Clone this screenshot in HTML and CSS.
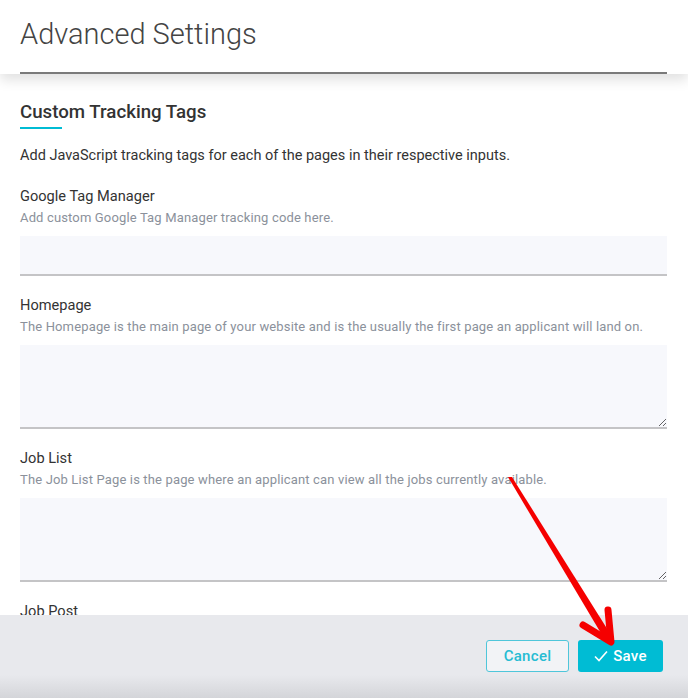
FILE: index.html
```html
<!doctype html>
<html lang="en">
<head>
    <meta charset="utf-8">
    <title>Advanced Settings</title>
    <meta name="viewport" content="width=device-width, initial-scale=1.0">
    <link rel="stylesheet" href="styles.css">
</head>
<body>
    <div class="modal">
        <header class="modal-header">
            <h1>Advanced Settings</h1>
        </header>
        <div class="modal-body">
            <h2 class="section-title">Custom Tracking Tags</h2>
            <p class="intro">Add JavaScript tracking tags for each of the pages in their respective inputs.</p>

            <div class="field">
                <label for="gtm">Google Tag Manager</label>
                <div class="hint">Add custom Google Tag Manager tracking code here.</div>
                <input type="text" id="gtm" class="input">
            </div>
            <div class="field">
                <label for="home">Homepage</label>
                <div class="hint">The Homepage is the main page of your website and is the usually the first page an applicant will land on.</div>
                <textarea id="home" class="input area"></textarea>
            </div>
            <div class="field">
                <label for="joblist">Job List</label>
                <div class="hint">The Job List Page is the page where an applicant can view all the jobs currently available.</div>
                <textarea id="joblist" class="input area"></textarea>
            </div>
            <div class="field">
                <label for="jobpost">Job Post</label>
                <div class="hint">The Job Post Page is the page where an applicant can view the details of a job.</div>
                <textarea id="jobpost" class="input area"></textarea>
            </div>
        </div>
        <footer class="modal-footer">
            <button class="btn btn-cancel">Cancel</button>
            <button class="btn btn-save">
                <svg width="14" height="12" viewBox="0 0 14 12"><path d="M1 6.5 L5 10.5 L13 1.5" fill="none" stroke="#fff" stroke-width="1.6"/></svg>
                Save
            </button>
        </footer>
    </div>
    <svg class="annotation" width="688" height="698" viewBox="0 0 688 698">
        <polygon points="508,477 512,477 611,635 605,640" fill="#f50000"/>
        <path d="M583 625 L611 642 L608 610" fill="none" stroke="#f50000" stroke-width="7" stroke-linecap="round" stroke-linejoin="round"/>
    </svg>
</body>
</html>
```

FILE: styles.css
```css
html, body {
    margin: 0;
    height: 100%;
}
body {
    font-family: Roboto, 'Liberation Sans', sans-serif;
    color: #333;
    background: #fff;
    overflow: hidden;
    position: relative;
}
.modal {
    display: flex;
    flex-direction: column;
    height: 698px;
}
.modal-header {
    position: relative;
    z-index: 2;
    background: #fff;
    box-shadow: 0 6px 12px rgba(0, 0, 0, 0.12);
}
.modal-header h1 {
    margin: 0 21px 0 20px;
    height: 74px;
    box-sizing: border-box;
    padding-top: 16px;
    font-size: 29px;
    line-height: 36px;
    font-weight: 300;
    color: #444;
    border-bottom: 2px solid #7a7a7a;
}
.modal-body {
    flex: 1;
    overflow: hidden;
    padding: 26px 21px 0 20px;
}
.section-title {
    margin: 0;
    font-size: 18.7px;
    line-height: 24px;
    font-weight: 500;
    color: #333;
}
.section-title::after {
    content: '';
    display: block;
    width: 42px;
    height: 2px;
    margin-top: 3px;
    background: #00bcd4;
}
.intro {
    margin: 17px 0 20px;
    font-size: 14.5px;
    line-height: 20px;
}
.field {
    margin-bottom: 19px;
}
.field label {
    display: block;
    font-size: 14.6px;
    line-height: 20px;
    color: #333;
}
.hint {
    margin-top: 3px;
    font-size: 13px;
    letter-spacing: 0.15px;
    line-height: 18px;
    color: #8b919b;
}
.input {
    display: block;
    width: 100%;
    box-sizing: border-box;
    margin-top: 9px;
    height: 40px;
    border: none;
    border-bottom: 2px solid #c4c4c6;
    background: #f7f8fc;
    outline: none;
    font: inherit;
}
.area {
    height: 84px;
    resize: vertical;
}
.modal-footer {
    height: 83px;
    box-sizing: border-box;
    display: flex;
    justify-content: flex-end;
    align-items: flex-start;
    gap: 9px;
    padding: 25px 25px 0 0;
    background: linear-gradient(to bottom, #e8e9ed 0, #e8e9ed 60px, #d4d5d9 83px);
}
.btn {
    height: 32px;
    border-radius: 3px;
    font-family: Roboto, 'Liberation Sans', sans-serif;
    font-size: 15px;
    font-weight: 500;
    letter-spacing: 0.3px;
    cursor: pointer;
    display: flex;
    align-items: center;
    justify-content: center;
    gap: 5px;
}
.btn-cancel {
    width: 83px;
    border: 1px solid #4fc6da;
    background: #f2f3f6;
    color: #27bcd3;
}
.btn-save {
    width: 85px;
    border: none;
    background: #00bcd4;
    color: #fff;
}
.annotation {
    position: absolute;
    top: 0;
    left: 0;
    pointer-events: none;
    z-index: 5;
}
```
